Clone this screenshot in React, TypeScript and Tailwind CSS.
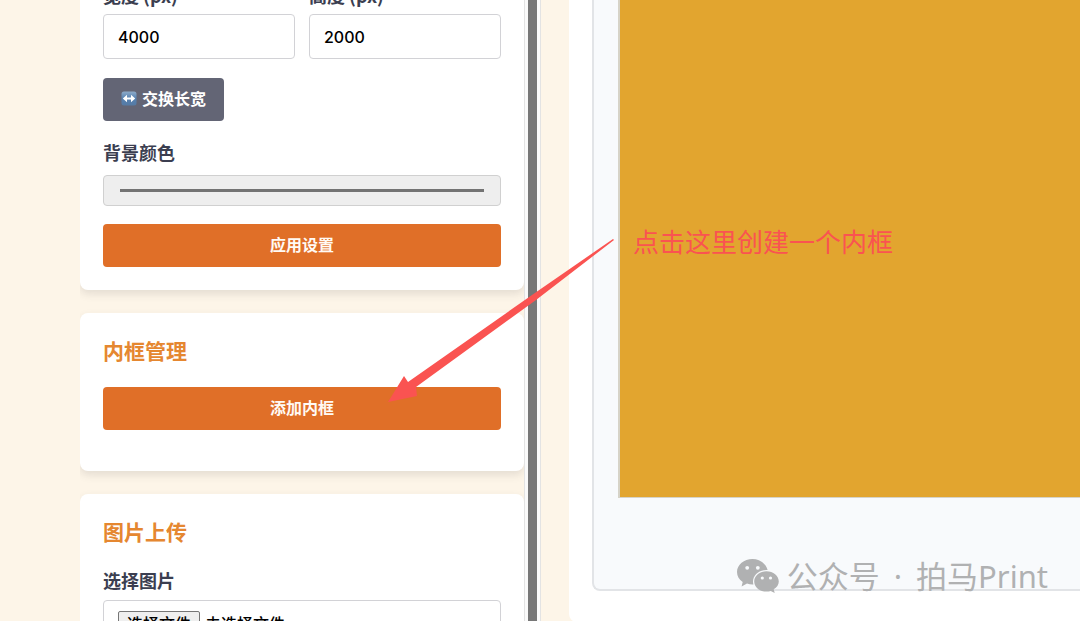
import type { ReactNode } from "react";

function Card({ children, className = "" }: { children: ReactNode; className?: string }) {
  return (
    <section className={`rounded-lg bg-white px-[23px] shadow-[0_4px_8px_rgba(60,60,60,0.13)] ${className}`}>
      {children}
    </section>
  );
}

function CardTitle({ children }: { children: ReactNode }) {
  return <h2 className="text-[21px] leading-7 font-bold text-[#e58730]">{children}</h2>;
}

function PrimaryButton({ children }: { children: ReactNode }) {
  return (
    <button
      type="button"
      className="block h-[43px] w-full rounded bg-[#e06f28] pb-0.5 text-base font-bold text-[#fffaf5]"
    >
      {children}
    </button>
  );
}

function SizeField({ id, label, value }: { id: string; label: string; value: string }) {
  return (
    <div className="min-w-0 flex-1">
      <label
        htmlFor={id}
        className="mb-[7px] block font-['Noto_Sans_CJK_SC',sans-serif] text-lg leading-6 font-bold text-[#3b3e50]"
      >
        {label}
      </label>
      <input
        id={id}
        type="text"
        inputMode="numeric"
        defaultValue={value}
        className="block h-[45px] w-full rounded border border-[#d2d2d6] bg-white px-3.5 text-base font-medium text-black"
      />
    </div>
  );
}

function SwapIcon() {
  return (
    <svg viewBox="0 0 16 16" className="size-4" aria-hidden="true">
      <defs>
        <linearGradient id="swap" x1="0" y1="0" x2="0" y2="1">
          <stop offset="0" stopColor="#8dabc9" />
          <stop offset="0.5" stopColor="#5781b0" />
          <stop offset="1" stopColor="#557aa4" />
        </linearGradient>
      </defs>
      <rect x="0.5" y="0.5" width="15" height="14" rx="2.5" fill="url(#swap)" />
      <path d="M1.8 7.5 6 3.8V6.5H10V3.8L14.2 7.5 10 11.2V8.5H6V11.2Z" fill="#fff" />
    </svg>
  );
}

function WeChatIcon() {
  return (
    <svg viewBox="0 0 42 34" className="h-[34px] w-[42px]" aria-hidden="true">
      <path
        d="M15.5 0C7 0 0 5.800 0 13c0 4.100 2.200 7.600 5.700 10L4.600 27.400l5.400-2.800c1.800.6 3.600.8 5.500.8h.9A11 11 0 0 1 16 22.500C16 16 22 11 29.300 11h1.300C29.200 4.700 22.900 0 15.500 0Z"
        fill="#b0b1b2"
      />
      <path
        d="M29.400 12.200c-6.800 0-12.200 4.600-12.200 10.200s5.400 10.200 12.200 10.200c1.600 0 3-.2 4.400-.7l3.900 2-1-3.600c3.100-1.900 5.100-4.700 5.100-7.900 0-5.600-5.500-10.200-12.400-10.200Z"
        fill="#b0b1b2"
      />
      <g fill="#f8fafc">
        <circle cx="10.200" cy="8.800" r="1.900" />
        <circle cx="20.800" cy="8.800" r="1.900" />
        <circle cx="25.300" cy="19" r="1.600" />
        <circle cx="33.500" cy="19" r="1.600" />
      </g>
    </svg>
  );
}

export default function App() {
  return (
    <div className="relative flex h-screen overflow-hidden bg-[#fdf5e8] pl-20 font-['Inter','Noto_Sans_CJK_SC',sans-serif]">
      <aside className="flex w-[461px] shrink-0 overflow-hidden">
        <div className="-mt-10 min-w-0 flex-1">
          <Card className="pt-[23px] pb-[23px]">
            <div className="flex gap-3.5">
              <SizeField id="width" label="宽度 (px)" value="4000" />
              <SizeField id="height" label="高度 (px)" value="2000" />
            </div>
            <button
              type="button"
              className="mt-[19px] flex h-[43px] items-center gap-[5px] rounded bg-[#636575] px-[18px] pb-0.5 text-base font-bold text-white"
            >
              <SwapIcon />
              交换长宽
            </button>
            <label
              htmlFor="background"
              className="mt-[21px] mb-[9px] block text-lg leading-6 font-bold text-[#3b3e50]"
            >
              背景颜色
            </label>
            <input
              id="background"
              type="color"
              defaultValue="#737373"
              className="block h-[31px] w-full appearance-none rounded border border-[#d0d0d0] bg-[#eeeeee] px-4 py-[13px] [&::-webkit-color-swatch]:border-0 [&::-webkit-color-swatch-wrapper]:p-0"
            />
            <div className="mt-[18px]">
              <PrimaryButton>应用设置</PrimaryButton>
            </div>
          </Card>

          <Card className="mt-[23px] pt-[25px] pb-[41px]">
            <CardTitle>内框管理</CardTitle>
            <div className="mt-[21px]">
              <PrimaryButton>添加内框</PrimaryButton>
            </div>
          </Card>

          <Card className="mt-[23px] pt-[25px] pb-[23px]">
            <CardTitle>图片上传</CardTitle>
            <span className="mt-[23px] mb-1.5 block text-lg leading-6 font-bold text-[#3b3e50]">
              选择图片
            </span>
            <label className="flex h-[48px] items-center gap-[5px] rounded border border-[#d2d2d6] px-3.5 text-base leading-6 font-medium text-black">
              <input type="file" accept="image/*" aria-label="选择图片" className="sr-only" />
              <span className="rounded-xs border border-[#767676] bg-[#efefef] px-2">选择文件</span>
              <span>未选择文件</span>
            </label>
          </Card>
        </div>
        <div className="flex w-[17px] shrink-0 justify-center border-x border-[#e3e3e3] bg-[#fafafa]">
          <div className="w-[9px] bg-[#777777]" />
        </div>
      </aside>

      <main className="-mt-10 ml-7 mb-[-1px] flex min-w-0 flex-1 rounded-l-lg bg-white pb-[31px] pl-[23px]">
        <div className="flex min-w-0 flex-1 rounded-l-lg border-2 border-r-0 border-[#e2e4e7] bg-[#f8fafc] pb-[91px] pl-6">
          <div className="flex-1 border-b border-l-2 border-[#d6d3c8] bg-[#e2a52f]" />
        </div>
      </main>

      <svg
        viewBox="0 0 226 166"
        className="pointer-events-none absolute top-[238px] left-[388px] h-[166px] w-[226px]"
        aria-hidden="true"
      >
        <path d="M225 1 226 2 148 62 28 149 29 158 0 164 16 138 20 144 144 57Z" fill="#fa5351" />
      </svg>
      <p className="absolute top-[223px] left-[633px] text-[26px] leading-10 whitespace-nowrap text-[#fa5351]">
        点击这里创建一个内框
      </p>
      <div className="absolute right-8 bottom-[25px] flex items-center gap-2 text-[#b0b1b2]">
        <WeChatIcon />
        <span className="flex gap-3.5 font-['Noto_Sans','Noto_Sans_CJK_SC',sans-serif] text-[31px] leading-10 whitespace-nowrap">
          <span>公众号</span>
          <span>·</span>
          <span>拍马Print</span>
        </span>
      </div>
    </div>
  );
}
